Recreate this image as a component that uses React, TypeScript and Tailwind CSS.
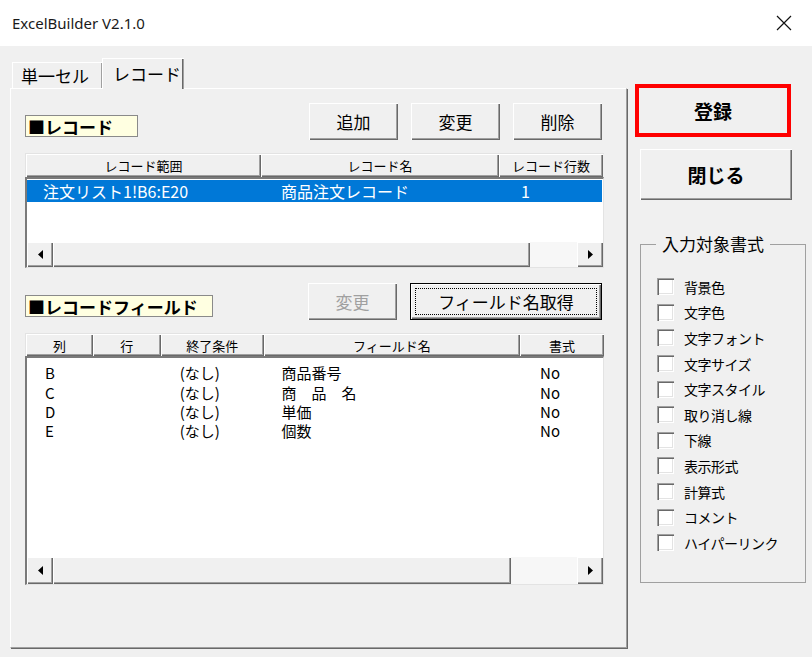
import React from 'react'

const raised =
  'bg-[#f0f0f0] shadow-[inset_1px_1px_0_#ffffff,inset_-1px_-1px_0_#696969,inset_-2px_-2px_0_#a0a0a0]'
const headerCell =
  'h-full flex items-center justify-center bg-[#f0f0f0] text-[13px] leading-none shadow-[inset_1px_1px_0_#ffffff,inset_-1px_-1px_0_#696969,inset_-2px_-2px_0_#a0a0a0]'
const sunken =
  'border-t-2 border-l-2 border-t-[#7a7a7a] border-l-[#7a7a7a] border-r border-b border-r-[#e3e3e3] border-b-[#e3e3e3]'

const recordCols = [
  { label: 'レコード範囲', w: 235 },
  { label: 'レコード名', w: 238 },
  { label: 'レコード行数', w: 104 },
]

const fieldCols = [
  { label: '列', w: 67 },
  { label: '行', w: 68 },
  { label: '終了条件', w: 103 },
  { label: 'フィールド名', w: 257 },
  { label: '書式', w: 84 },
]

const fields = [
  { col: 'B', end: '(なし)', name: '商品番号', fmt: 'No' },
  { col: 'C', end: '(なし)', name: '商　品　名', fmt: 'No' },
  { col: 'D', end: '(なし)', name: '単価', fmt: 'No' },
  { col: 'E', end: '(なし)', name: '個数', fmt: 'No' },
]

const formats = [
  '背景色',
  '文字色',
  '文字フォント',
  '文字サイズ',
  '文字スタイル',
  '取り消し線',
  '下線',
  '表示形式',
  '計算式',
  'コメント',
  'ハイパーリンク',
]

function Arrow({ dir }: { dir: 'left' | 'right' }) {
  return (
    <svg width="5" height="9" viewBox="0 0 5 9">
      {dir === 'left' ? <polygon points="5,0 0,4.5 5,9" fill="#000" /> : <polygon points="0,0 5,4.5 0,9" fill="#000" />}
    </svg>
  )
}

function HScroll({ thumb, height }: { thumb: number; height: string }) {
  return (
    <div className={`flex ${height} bg-[#f0f0f0]`}>
      <div className={`w-[26px] h-full flex items-center justify-center ${raised}`}>
        <Arrow dir="left" />
      </div>
      <div className={`h-full ${raised}`} style={{ width: thumb }} />
      <div className="flex-1 h-full bg-[#f7f7f7]" />
      <div className={`w-[26px] h-full flex items-center justify-center ${raised}`}>
        <Arrow dir="right" />
      </div>
    </div>
  )
}

function Btn({ children, disabled, focused, className = '' }: { children: React.ReactNode; disabled?: boolean; focused?: boolean; className?: string }) {
  if (focused) {
    return (
      <div className={`border border-black ${className}`}>
        <div className={`w-full h-full p-[4px] ${raised}`}>
          <div className="w-full h-full border border-dotted border-black flex items-center justify-center text-[17px] leading-none">
            {children}
          </div>
        </div>
      </div>
    )
  }
  return (
    <div
      className={`flex items-center justify-center text-[17px] leading-none ${raised} ${disabled ? 'text-[#a0a0a0]' : 'text-black'} ${className}`}
    >
      {children}
    </div>
  )
}

function Tag({ children, w }: { children: React.ReactNode; w: string }) {
  return (
    <div className={`${w} h-[22px] mb-[3px] bg-[#ffffe1] border border-[#8a8a8a] flex items-center pl-[2px] text-[17px] font-bold leading-none`}>
      {children}
    </div>
  )
}

export default function App() {
  return (
    <div className="w-[812px] h-[657px] bg-[#f0f0f0] flex flex-col overflow-hidden text-black font-['Noto_Sans_CJK_JP',sans-serif]">
      {/* title bar */}
      <div className="h-[46px] bg-white flex items-center justify-between pl-[12px] pr-[20px]">
        <span className="text-[15px] font-['Noto_Sans',sans-serif] text-[#1a1a1a]">ExcelBuilder V2.1.0</span>
        <svg width="16" height="16" viewBox="0 0 16 16">
          <path d="M1 1 L15 15 M15 1 L1 15" stroke="#111" strokeWidth="1.2" />
        </svg>
      </div>

      <div className="flex flex-1">
        {/* left: tabs */}
        <div className="pl-[10px] pt-[12px] flex flex-col">
          <div className="flex items-end h-[30px] pl-[2px]">
            <div className="w-[90px] h-[26px] flex items-center pl-[8px] text-[17px] leading-none border-t border-l border-white shadow-[inset_-1px_0_0_#a0a0a0]">
              単一セル
            </div>
            <div className="relative z-10 -mb-px w-[82px] h-[31px] bg-[#f0f0f0] flex items-center pl-[10px] pb-[2px] text-[17px] leading-none border-t border-l border-white shadow-[inset_-1px_0_0_#a0a0a0,inset_-2px_0_0_#696969]">
              レコード
            </div>
          </div>

          <div className="w-[617px] h-[560px] border-t border-l border-white border-r border-b border-r-[#a0a0a0] border-b-[#a0a0a0] shadow-[1px_1px_0_#696969] pl-[14px] pt-[14px]">
            {/* record section */}
            <div className="w-[579px] h-[37px] flex items-end">
              <Tag w="w-[113px]">■レコード</Tag>
              <div className="ml-auto mr-[2px] flex gap-[13px] h-full">
                <Btn className="w-[89px] h-full">追加</Btn>
                <Btn className="w-[89px] h-full">変更</Btn>
                <Btn className="w-[89px] h-full">削除</Btn>
              </div>
            </div>

            <div className="w-[579px] mt-[13px]">
              <div className="flex h-[24px] border-t border-l border-[#e3e3e3]">
                {recordCols.map((c) => (
                  <div key={c.label} className={headerCell} style={{ width: c.w }}>
                    {c.label}
                  </div>
                ))}
              </div>
              <div className={`h-[91px] bg-white flex flex-col ${sunken}`}>
                <div className="flex-1 pt-[1px]">
                  <div className="flex h-[22px] bg-[#0078d7] text-white text-[16px] leading-none items-center mr-[1px]">
                    <div className="w-[233px] pl-[16px]">注文リスト1!B6:E20</div>
                    <div className="w-[238px] pl-[21px]">商品注文レコード</div>
                    <div className="w-[104px] pl-[23px]">1</div>
                  </div>
                </div>
                <HScroll thumb={477} height="h-[25px]" />
              </div>
            </div>

            {/* field section */}
            <div className="w-[579px] h-[37px] flex items-end mt-[15px]">
              <Tag w="w-[188px]">■レコードフィールド</Tag>
              <div className="ml-auto mr-[2px] flex gap-[13px] h-full">
                <Btn disabled className="w-[89px] h-full">変更</Btn>
                <Btn focused className="w-[192px] h-full">フィールド名取得</Btn>
              </div>
            </div>

            <div className="w-[579px] mt-[13px]">
              <div className="flex h-[23px] border-t border-l border-[#e3e3e3]">
                {fieldCols.map((c) => (
                  <div key={c.label} className={headerCell} style={{ width: c.w }}>
                    {c.label}
                  </div>
                ))}
              </div>
              <div className={`h-[229px] bg-white flex flex-col ${sunken}`}>
                <div className="flex-1 pt-[5px]">
                  {fields.map((f) => (
                    <div key={f.col} className="flex h-[19.4px] items-center text-[15px] leading-[15px]">
                      <div className="w-[65px] pl-[18px]">{f.col}</div>
                      <div className="w-[68px]" />
                      <div className="w-[103px] pl-[20px]">{f.end}</div>
                      <div className="w-[257px] pl-[19px]">{f.name}</div>
                      <div className="w-[84px] pl-[21px]">{f.fmt}</div>
                    </div>
                  ))}
                </div>
                <HScroll thumb={458} height="h-[27px]" />
              </div>
            </div>
          </div>
        </div>

        {/* right column */}
        <div className="ml-[8px] pt-[38px] flex flex-col">
          <div className="w-[156px] h-[53px] border-4 border-[#ff0000] bg-[#f0f0f0] flex items-center justify-center text-[19px] font-bold leading-none">
            登録
          </div>
          <div className={`ml-[5px] mt-[12px] w-[152px] h-[51px] flex items-center justify-center text-[19px] font-bold leading-none ${raised}`}>
            閉じる
          </div>

          <fieldset className="ml-[5px] mt-[34px] w-[166px] h-[349px] border border-[#a0a0a0] pl-[16px] pt-[20px]">
            <legend className="-ml-px px-[6px] text-[17px] leading-[20px]">入力対象書式</legend>
            <div className="flex flex-col">
              {formats.map((label) => (
                <div key={label} className="flex items-center h-[25.6px] gap-[10px]">
                  <div className="w-[17px] h-[17px] bg-white shadow-[inset_1px_1px_0_#a0a0a0,inset_2px_2px_0_#696969,inset_-1px_-1px_0_#ffffff,inset_-2px_-2px_0_#e3e3e3]" />
                  <span className="text-[14px] leading-none tracking-[-0.5px]">{label}</span>
                </div>
              ))}
            </div>
          </fieldset>
        </div>
      </div>
    </div>
  )
}
